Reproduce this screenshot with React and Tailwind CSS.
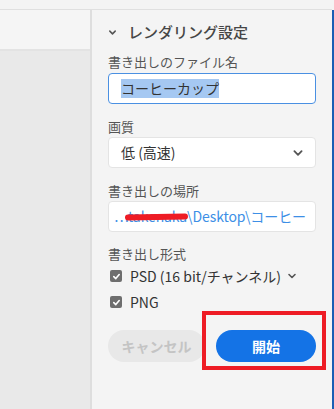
import React from 'react';

const font = { fontFamily: '"Noto Sans CJK JP", "Noto Sans", sans-serif' };

const Check = () => (
  <span className="flex h-[12px] w-[12px] items-center justify-center rounded-[2px] bg-[#6e6e6e]">
    <svg width="9" height="9" viewBox="0 0 10 10" fill="none">
      <path d="M2 5.2 L4.2 7.3 L8 2.8" stroke="#fff" strokeWidth="1.8" strokeLinecap="round" strokeLinejoin="round" />
    </svg>
  </span>
);

const Chevron = ({ size = 10, color = '#555', stroke = 1.6 }) => (
  <svg width={size} height={size} viewBox="0 0 10 10" fill="none">
    <path d="M2 3.5 L5 6.5 L8 3.5" stroke={color} strokeWidth={stroke} strokeLinecap="round" strokeLinejoin="round" />
  </svg>
);

const Label = ({ children, className = '' }) => (
  <div className={`h-[16px] text-[13px] leading-[16px] text-[#555] ${className}`}>{children}</div>
);

export default function App() {
  return (
    <div className="flex h-[409px] w-[334px] flex-col overflow-hidden bg-[#f4f4f4]" style={font}>
      {/* 上のバー */}
      <div className="h-[10px] shrink-0 border-b border-[#e0e0e0] bg-[#f4f4f4] mr-[2px]" />

      <div className="flex flex-1">
        {/* 左のパネル */}
        <div className="flex w-[92px] shrink-0 flex-col border-r-2 border-[#dedede]">
          <div className="h-[41px] border-b-2 border-[#e3e3e3] bg-[#f5f5f5]" />
          <div className="flex-1 bg-[#e9e9e9]" />
        </div>

        {/* 書き出し設定 */}
        <div className="flex w-[240px] min-w-0 shrink-0 flex-col px-[16px] pt-[12px]">
          <div className="flex h-[20px] items-center">
            <Chevron size={9} color="#555" stroke={1.7} />
            <span className="ml-[11px] text-[15px] font-medium text-[#464646]">レンダリング設定</span>
          </div>

          <Label className="mt-[12px]">書き出しのファイル名</Label>
          <div className="mt-[3px] flex h-[31px] items-center rounded-[4px] border border-[#4a90e2] bg-white pl-[12px]">
            <span className="bg-[#a5c8f2] text-[14px] leading-[19px] text-[#333]">コーヒーカップ</span>
          </div>

          <Label className="mt-[15px]">画質</Label>
          <div className="mt-[2px] flex h-[31px] items-center justify-between rounded-[4px] border border-[#e4e4e4] bg-white pl-[12px] pr-[11px]">
            <span className="text-[14px] text-[#333]">低 (高速)</span>
            <Chevron size={12} color="#555" stroke={1.5} />
          </div>

          <Label className="mt-[15px]">書き出しの場所</Label>
          <div className="mt-[2px] flex h-[31px] items-center overflow-hidden whitespace-nowrap rounded-[4px] border border-[#e4e4e4] bg-white pl-[5px]">
            <span className="relative text-[14px] tracking-[-0.1px] text-[#3d8fe6]">
              ⋯takenaka\Desktop\コーヒー
              <span className="absolute left-[11px] top-[8px] h-[6px] w-[63px] -rotate-1 rounded-full bg-[#ee1c25]" />
            </span>
          </div>

          <Label className="mt-[14px]">書き出し形式</Label>
          <div className="mt-[4px] flex h-[20px] items-center pl-[2px]">
            <Check />
            <span className="ml-[8px] text-[14px] text-[#333]">PSD (16 bit/チャンネル)</span>
            <span className="ml-[6px]">
              <Chevron size={10} color="#555" stroke={1.6} />
            </span>
          </div>
          <div className="mt-[6px] flex h-[20px] items-center pl-[2px]">
            <Check />
            <span className="ml-[8px] text-[14px] text-[#333]">PNG</span>
          </div>

          <div className="mt-[18px] flex gap-[11px]">
            <button className="h-[32px] w-[97px] rounded-full bg-[#e8e8e8] text-[14px] font-bold text-[#c4c4c4]">
              キャンセル
            </button>
            <div className="relative">
              <button className="h-[32px] w-[100px] rounded-full bg-[#1473e6] text-[14px] font-bold text-white">
                開始
              </button>
              <div className="pointer-events-none absolute -left-[14px] -right-[10px] -top-[19px] -bottom-[8px] border-4 border-[#ee1c25]" />
            </div>
          </div>
        </div>

        {/* 右端の枠 */}
        <div className="w-[2px] shrink-0 bg-[#1a5fb4]" />
      </div>
    </div>
  );
}
